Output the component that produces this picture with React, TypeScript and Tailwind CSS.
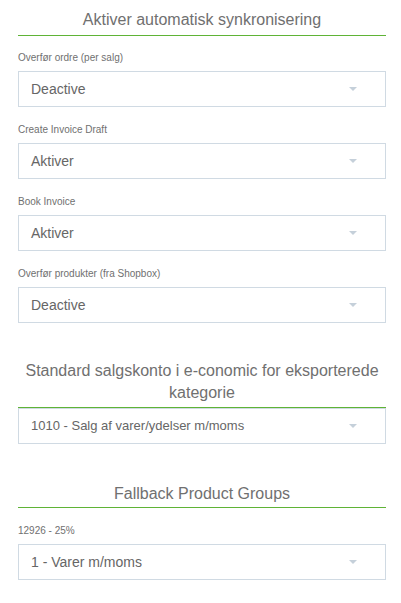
const font = { fontFamily: '"Liberation Sans", Arial, sans-serif' }

function Heading({ children, pb = 'pb-[4px]' }: { children: React.ReactNode; pb?: string }) {
  return (
    <div className={`border-b border-[#5fb336] text-center text-[16px] leading-[22px] text-[#707070] ${pb}`}>
      {children}
    </div>
  )
}

function Select({ value, small = false }: { value: string; small?: boolean }) {
  return (
    <div className="flex h-[36px] items-center justify-between border border-[#d0dae3] bg-white pl-[12px] pr-[28px]">
      <span className={`${small ? 'text-[13px]' : 'text-[14px]'} text-[#666]`}>{value}</span>
      <span className="h-0 w-0 border-x-[4px] border-t-[4px] border-x-transparent border-t-[#c5d0da]" />
    </div>
  )
}

function Field({ label, value, first = false }: { label: string; value: string; first?: boolean }) {
  return (
    <div className={first ? 'mt-[15px]' : 'mt-[16px]'}>
      <div className="mb-[7px] text-[10px] leading-[13px] text-[#707070]">{label}</div>
      <Select value={value} />
    </div>
  )
}

export default function App() {
  return (
    <div className="min-h-[603px] bg-white pl-[18px] pr-[15px] pt-[9px] pb-8" style={font}>
      <Heading>Aktiver automatisk synkronisering</Heading>
      <Field label="Overfør ordre (per salg)" value="Deactive" first />
      <Field label="Create Invoice Draft" value="Aktiver" />
      <Field label="Book Invoice" value="Aktiver" />
      <Field label="Overfør produkter (fra Shopbox)" value="Deactive" />

      <div className="mt-[37px]">
        <Heading pb="pb-[3px]">
          Standard salgskonto i e-conomic for eksporterede
          <br />
          kategorie
        </Heading>
        <Select value="1010 - Salg af varer/ydelser m/moms" small />
      </div>

      <div className="mt-[39px]">
        <Heading pb="pb-[2px]">Fallback Product Groups</Heading>
        <Field label="12926 - 25%" value="1 - Varer m/moms" />
      </div>
    </div>
  )
}
